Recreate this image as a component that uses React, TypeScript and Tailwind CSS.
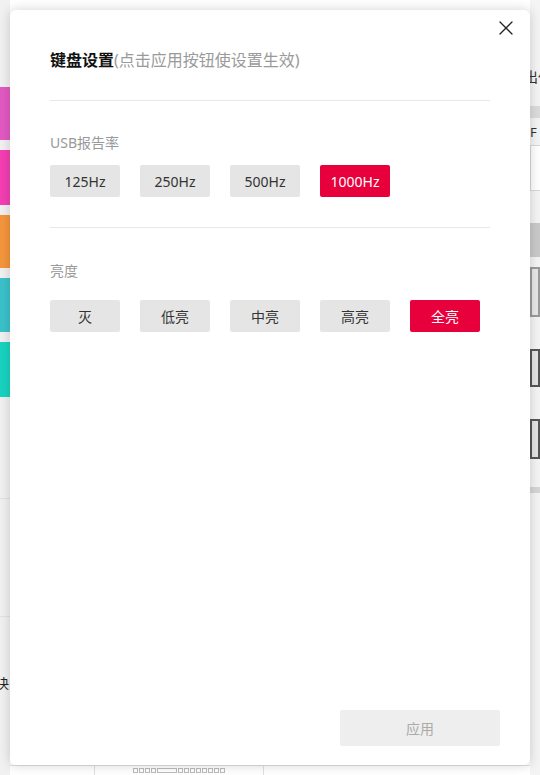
import { X } from 'lucide-react';

const RATES = ['125Hz', '250Hz', '500Hz', '1000Hz'];
const LEVELS = ['灭', '低亮', '中亮', '高亮', '全亮'];

function OptionRow({ items, active }: { items: string[]; active: string }) {
  return (
    <div className="flex gap-5">
      {items.map((item) => (
        <button
          key={item}
          className={
            item === active
              ? 'h-8 w-[70px] rounded-[2px] bg-[#e8003d] text-[14px] text-white'
              : 'h-8 w-[70px] rounded-[2px] bg-[#e5e5e5] text-[14px] text-[#333]'
          }
        >
          {item}
        </button>
      ))}
    </div>
  );
}

export default function App() {
  return (
    <div
      className="relative h-[775px] w-[540px] overflow-hidden bg-white"
      style={{ fontFamily: '"Noto Sans", "Noto Sans CJK SC", sans-serif' }}
    >
      {/* page behind the dialog */}
      <div className="flex h-full">
        <div className="flex w-[10px] flex-col bg-[#f1f1f1]">
          <div className="h-[87px]" />
          <div className="h-[53px] bg-[#e25ac3]" />
          <div className="h-[10px]" />
          <div className="h-[55px] bg-[#f43fb3]" />
          <div className="h-[10px]" />
          <div className="h-[53px] bg-[#f4963c]" />
          <div className="h-[10px]" />
          <div className="h-[54px] bg-[#3bc2cb]" />
          <div className="h-[10px]" />
          <div className="h-[55px] bg-[#19d3c0]" />
          <div className="h-[102px] border-b border-[#e2e2e2]" />
          <div className="h-[118px] border-b border-[#e2e2e2]" />
          <div className="mt-[60px] overflow-hidden whitespace-nowrap text-[13px] leading-none text-[#222]">
            <span className="-ml-[4px]">决</span>
          </div>
        </div>
        <div className="flex flex-1 flex-col justify-end">
          <div className="flex h-[10px] border-t border-[#e0e0e0]">
            <div className="w-[85px] border-r border-[#e0e0e0]" />
            <div className="flex w-[169px] items-start justify-center gap-px border-r border-[#e0e0e0] pt-[2px]">
              {Array.from({ length: 13 }).map((_, i) => (
                <div key={i} className={i === 4 ? 'h-[5px] w-[20px] border border-[#bbb]' : 'h-[5px] w-[5px] border border-[#bbb]'} />
              ))}
            </div>
          </div>
        </div>
        <div className="flex w-[10px] flex-col bg-[#f4f4f4]">
          <div className="h-[70px]" />
          <div className="overflow-hidden whitespace-nowrap text-[14px] leading-none text-[#333]">
            <span className="-ml-[6px]">出任</span>
          </div>
          <div className="mt-[22px] h-[12px] bg-[#dcdcdc]" />
          <div className="mt-[8px] text-[13px] leading-none text-[#333]">F</div>
          <div className="mt-[6px] h-[46px] border-l border-t border-b border-[#d8d8d8] bg-white" />
          <div className="mt-[32px] h-[34px] bg-[#c9c9c9]" />
          <div className="mt-[10px] h-[50px] border-2 border-[#9a9a9a] bg-[#e8e8e8]" />
          <div className="mt-[32px] h-[38px] border-2 border-[#555] bg-[#e4e4e4]" />
          <div className="mt-[32px] h-[40px] border-2 border-[#555] bg-[#e4e4e4]" />
          <div className="mt-[28px] h-[6px] bg-[#d6d6d6]" />
        </div>
      </div>

      {/* dialog */}
      <div className="absolute left-[10px] top-[10px] flex h-[755px] w-[520px] flex-col rounded-[6px] bg-white px-10 pt-[38px] shadow-[0_0_12px_rgba(0,0,0,0.18)]">
        <button className="absolute right-[12px] top-[6px] text-[#222]">
          <X className="h-6 w-6" strokeWidth={1.3} />
        </button>

        <h2 className="text-[16px] leading-6">
          <span className="font-bold text-[#111]">键盘设置</span>
          <span className="text-[#9a9a9a]">(点击应用按钮使设置生效)</span>
        </h2>

        <div className="mt-[28px] border-t border-[#e8e8e8]" />

        <div className="mt-[32px] text-[14px] leading-5 text-[#999]">USB报告率</div>
        <div className="mt-[12px]">
          <OptionRow items={RATES} active="1000Hz" />
        </div>

        <div className="mt-[30px] border-t border-[#e8e8e8]" />

        <div className="mt-[33px] text-[14px] leading-5 text-[#999]">亮度</div>
        <div className="mt-[19px]">
          <OptionRow items={LEVELS} active="全亮" />
        </div>

        <div className="mt-auto mb-[19px] -mr-[10px] flex justify-end">
          <button className="h-[36px] w-[160px] rounded-[2px] bg-[#eeeeee] text-[14px] text-[#aaa]">
            应用
          </button>
        </div>
      </div>
    </div>
  );
}
